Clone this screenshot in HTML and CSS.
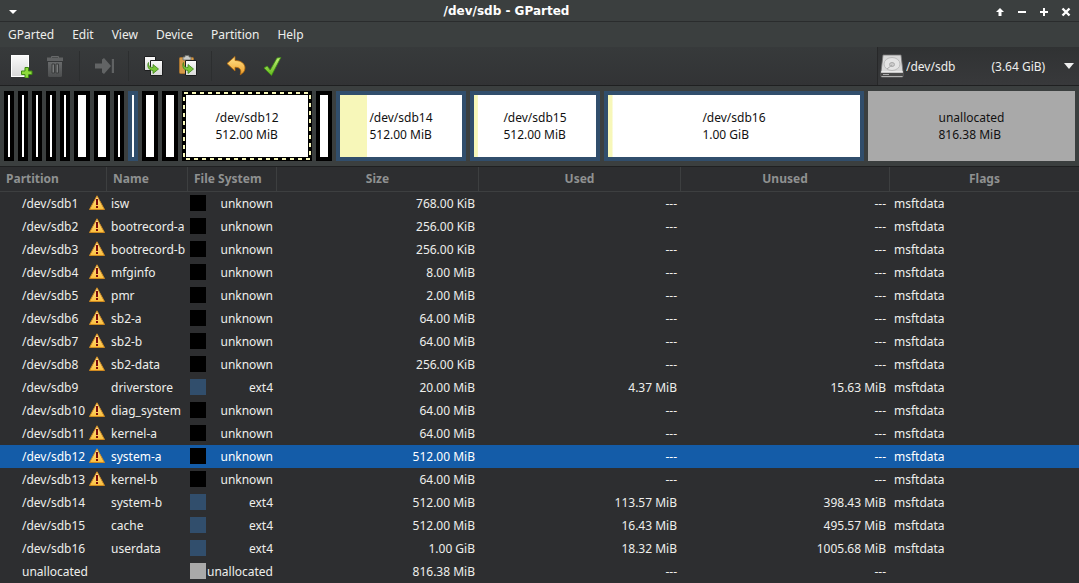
FILE: index.html
```html
<!DOCTYPE html>
<html lang="en">
<head>
<meta charset="utf-8">
<title>/dev/sdb - GParted</title>
<link rel="stylesheet" href="styles.css">
</head>
<body>
<svg class="defs" aria-hidden="true">
  <defs>
    <linearGradient id="g-warn" x1="0" y1="0" x2="0" y2="1"><stop offset="0" stop-color="#ffe79a"/><stop offset="1" stop-color="#fbbf3a"/></linearGradient>
    <linearGradient id="g-page" x1="0" y1="0" x2="0" y2="1"><stop offset="0" stop-color="#fafafa"/><stop offset="1" stop-color="#d9d9d9"/></linearGradient>
    <linearGradient id="g-green" x1="0" y1="0" x2="0" y2="1"><stop offset="0" stop-color="#c2f078"/><stop offset="1" stop-color="#62b81c"/></linearGradient>
    <linearGradient id="g-undo" x1="0" y1="0" x2="0" y2="1"><stop offset="0" stop-color="#ffe28a"/><stop offset="1" stop-color="#f0a02a"/></linearGradient>
    <linearGradient id="g-bin" x1="0" y1="0" x2="0" y2="1"><stop offset="0" stop-color="#686a6b"/><stop offset="1" stop-color="#4c4e4f"/></linearGradient>
    <symbol id="warn" viewBox="0 0 16 16">
      <path d="M8 .8 L15.500 14.500 H.5 Z" fill="url(#g-warn)" stroke="#d08a20" stroke-width="1" stroke-linejoin="round"/>
      <path d="M7 4h2v6H7zM7 11h2v2H7z" fill="#7c0a0a"/>
    </symbol>
  </defs>
</svg>
<header class="titlebar">
  <button class="win-btn" aria-label="Window menu"><svg width="10" height="10"><path d="M1 3h8L5 7z" fill="#fff"/></svg></button>
  <h1 class="title">/dev/sdb - GParted</h1>
  <div class="win-controls">
    <button class="win-btn" aria-label="Shade"><svg width="10" height="10"><path d="M5 1L9 5H6.500v4h-3V5H1z" fill="#fff"/></svg></button>
    <button class="win-btn" aria-label="Minimize"><svg width="10" height="10"><path d="M1 4h8v2H1z" fill="#fff"/></svg></button>
    <button class="win-btn" aria-label="Maximize"><svg width="10" height="10"><path d="M4 1h2v3h3v2H6v3H4V6H1V4h3z" fill="#fff"/></svg></button>
    <button class="win-btn" aria-label="Close"><svg width="10" height="10"><path d="M1.500 1.500l7 7M8.500 1.500l-7 7" stroke="#fff" stroke-width="2.400"/></svg></button>
  </div>
</header>
<nav class="menubar">
  <button>GParted</button><button>Edit</button><button>View</button><button>Device</button><button>Partition</button><button>Help</button>
</nav>
<div class="toolbar">
  <div class="tools">
    <button class="tool" aria-label="New partition"><svg width="24" height="24">
      <rect x="2.500" y="1.500" width="17" height="21" fill="url(#g-page)" stroke="#fff"/>
      <path d="M16 13.500h3.500V17H23v3.500h-3.500V24H16v-3.500h-3.500V17H16z" fill="#8edb3c" stroke="#3f8a12"/>
    </svg></button>
    <button class="tool" aria-label="Delete" disabled><svg width="24" height="24">
      <path d="M8.500 4V2.500h7V4" fill="none" stroke="#686a6b"/><path d="M4 3.500h16v3.500H4z" fill="#606263"/>
      <path d="M5 8h14v13.500q0 1.500-1.500 1.500h-11Q5 23 5 21.500z" fill="url(#g-bin)"/>
      <path d="M9 10h2.500v9H9zM13 10h2.500v9H13z" fill="#7a7c7d" stroke="#3a3c3d"/>
    </svg></button>
    <span class="sep"></span>
    <button class="tool" aria-label="Resize/Move" disabled><svg width="24" height="24">
      <path d="M3 9.500h7V5.500L12 4l7 8-7 8-2-1.500v-4H3z" fill="#626465"/><path d="M19 5h3v14h-3z" fill="#606263"/><path d="M19.500 5v14" stroke="#3c3e40"/>
    </svg></button>
    <span class="sep"></span>
    <button class="tool" aria-label="Copy"><svg width="24" height="24">
      <path d="M3.500 2.500h11v14h-11z" fill="url(#g-page)" stroke="#1d1e1f"/>
      <path d="M9.500 6.500h12v15h-12z" fill="url(#g-page)" stroke="#1d1e1f"/>
      <path d="M7.500 8.500c-.5 3 1 5 4.500 5v-3l5.500 4.500-5.500 4.500v-3c-4 0-6.500-4-4.500-8z" fill="#79c63a" stroke="#3d8419" stroke-width=".8"/>
    </svg></button>
    <button class="tool" aria-label="Paste"><svg width="24" height="24">
      <rect x="4.500" y="3.500" width="14" height="16" rx="1" fill="#d59a48" stroke="#a87430"/>
      <path d="M8 3h2V1.500h4V3h2v3H8z" fill="#c9cbc8" stroke="#6c6e6b" stroke-width=".8"/>
      <path d="M10.500 6.500h11v15h-11z" fill="url(#g-page)" stroke="#1d1e1f"/>
      <path d="M8.500 8.500c-.5 3 1 5 4.500 5v-3l5.500 4.500-5.500 4.500v-3c-4 0-6.500-4-4.500-8z" fill="#79c63a" stroke="#3d8419" stroke-width=".8"/>
    </svg></button>
    <span class="sep"></span>
    <button class="tool" aria-label="Undo"><svg width="24" height="24">
      <path d="M3 9.500L11 2.500v4C17.500 6.500 21 10 21 14c0 3-2 5.500-4.800 6.800 1.500-4 .5-7.500-5.200-7.500v3.700z" fill="url(#g-undo)" stroke="#b5690c" stroke-width=".8" stroke-linejoin="round"/>
    </svg></button>
    <button class="tool" aria-label="Apply"><svg width="24" height="24" viewBox="-5 0 24 24">
      <path d="M1 14l3.200-2 3 4L14 4l3.800-.5L8.500 21.500z" fill="url(#g-green)" stroke="#3f9412" stroke-width=".8" stroke-linejoin="round"/>
    </svg></button>
  </div>
  <label class="device">
    <svg width="24" height="24" aria-hidden="true">
      <path d="M3 1h18l2 17v4q0 1-1 1H2q-1 0-1-1v-4z" fill="#d8d8d8" stroke="#777" stroke-width=".8"/>
      <path d="M1 18.500h22V22H1z" fill="#4a4a4a"/><path d="M1 18h22" stroke="#fff"/><path d="M3 20.500h6" stroke="#aaa"/>
      <ellipse cx="12" cy="10" rx="8" ry="6.500" fill="#e4e4e4" stroke="#bbb"/><ellipse cx="12" cy="10.500" rx="2.500" ry="2" fill="#ccc" stroke="#aaa"/><path d="M12 11l-5 4" stroke="#aaa"/>
    </svg>
    <select aria-label="Device"><option>/dev/sdb&emsp;&emsp;&emsp;(3.64 GiB)</option></select>
    <svg class="arrow" width="10" height="6" aria-hidden="true"><path d="M0 0h10L5 6z" fill="#eee"/></svg>
  </label>
</div>
<section class="map" aria-label="Disk layout">
  <div class="part"></div><div class="part"></div><div class="part"></div><div class="part"></div><div class="part"></div>
  <div class="part"></div><div class="part"></div><div class="part"></div><div class="part ext4"></div><div class="part"></div><div class="part"></div>
  <div class="part"><svg class="dash"><rect x="2" y="2"/></svg><p>/dev/sdb12<br>512.00 MiB</p></div>
  <div class="part"></div>
  <div class="part ext4" style="--used:22.2%"><p>/dev/sdb14<br>512.00 MiB</p></div>
  <div class="part ext4" style="--used:3.2%"><p>/dev/sdb15<br>512.00 MiB</p></div>
  <div class="part ext4" style="--used:1.8%"><p>/dev/sdb16<br>1.00 GiB</p></div>
  <div class="part free"><p>unallocated<br>816.38 MiB</p></div>
</section>
<table class="list">
  <colgroup><col class="c-part"><col class="c-name"><col class="c-fs"><col class="c-size"><col class="c-used"><col class="c-unused"><col></colgroup>
  <thead><tr><th class="l">Partition</th><th class="l">Name</th><th class="l">File System</th><th>Size</th><th>Used</th><th>Unused</th><th>Flags</th></tr></thead>
  <tbody>
  <tr><td><div class="cell">/dev/sdb1<svg><use href="#warn"/></svg></div></td><td>isw</td><td><div class="cell"><i></i>unknown</div></td><td>768.00 KiB</td><td>---</td><td>---</td><td>msftdata</td></tr>
  <tr><td><div class="cell">/dev/sdb2<svg><use href="#warn"/></svg></div></td><td>bootrecord-a</td><td><div class="cell"><i></i>unknown</div></td><td>256.00 KiB</td><td>---</td><td>---</td><td>msftdata</td></tr>
  <tr><td><div class="cell">/dev/sdb3<svg><use href="#warn"/></svg></div></td><td>bootrecord-b</td><td><div class="cell"><i></i>unknown</div></td><td>256.00 KiB</td><td>---</td><td>---</td><td>msftdata</td></tr>
  <tr><td><div class="cell">/dev/sdb4<svg><use href="#warn"/></svg></div></td><td>mfginfo</td><td><div class="cell"><i></i>unknown</div></td><td>8.00 MiB</td><td>---</td><td>---</td><td>msftdata</td></tr>
  <tr><td><div class="cell">/dev/sdb5<svg><use href="#warn"/></svg></div></td><td>pmr</td><td><div class="cell"><i></i>unknown</div></td><td>2.00 MiB</td><td>---</td><td>---</td><td>msftdata</td></tr>
  <tr><td><div class="cell">/dev/sdb6<svg><use href="#warn"/></svg></div></td><td>sb2-a</td><td><div class="cell"><i></i>unknown</div></td><td>64.00 MiB</td><td>---</td><td>---</td><td>msftdata</td></tr>
  <tr><td><div class="cell">/dev/sdb7<svg><use href="#warn"/></svg></div></td><td>sb2-b</td><td><div class="cell"><i></i>unknown</div></td><td>64.00 MiB</td><td>---</td><td>---</td><td>msftdata</td></tr>
  <tr><td><div class="cell">/dev/sdb8<svg><use href="#warn"/></svg></div></td><td>sb2-data</td><td><div class="cell"><i></i>unknown</div></td><td>256.00 KiB</td><td>---</td><td>---</td><td>msftdata</td></tr>
  <tr><td><div class="cell">/dev/sdb9</div></td><td>driverstore</td><td><div class="cell"><i class="ext4"></i>ext4</div></td><td>20.00 MiB</td><td>4.37 MiB</td><td>15.63 MiB</td><td>msftdata</td></tr>
  <tr><td><div class="cell">/dev/sdb10<svg><use href="#warn"/></svg></div></td><td>diag_system</td><td><div class="cell"><i></i>unknown</div></td><td>64.00 MiB</td><td>---</td><td>---</td><td>msftdata</td></tr>
  <tr><td><div class="cell">/dev/sdb11<svg><use href="#warn"/></svg></div></td><td>kernel-a</td><td><div class="cell"><i></i>unknown</div></td><td>64.00 MiB</td><td>---</td><td>---</td><td>msftdata</td></tr>
  <tr class="active"><td><div class="cell">/dev/sdb12<svg><use href="#warn"/></svg></div></td><td>system-a</td><td><div class="cell"><i></i>unknown</div></td><td>512.00 MiB</td><td>---</td><td>---</td><td>msftdata</td></tr>
  <tr><td><div class="cell">/dev/sdb13<svg><use href="#warn"/></svg></div></td><td>kernel-b</td><td><div class="cell"><i></i>unknown</div></td><td>64.00 MiB</td><td>---</td><td>---</td><td>msftdata</td></tr>
  <tr><td><div class="cell">/dev/sdb14</div></td><td>system-b</td><td><div class="cell"><i class="ext4"></i>ext4</div></td><td>512.00 MiB</td><td>113.57 MiB</td><td>398.43 MiB</td><td>msftdata</td></tr>
  <tr><td><div class="cell">/dev/sdb15</div></td><td>cache</td><td><div class="cell"><i class="ext4"></i>ext4</div></td><td>512.00 MiB</td><td>16.43 MiB</td><td>495.57 MiB</td><td>msftdata</td></tr>
  <tr><td><div class="cell">/dev/sdb16</div></td><td>userdata</td><td><div class="cell"><i class="ext4"></i>ext4</div></td><td>1.00 GiB</td><td>18.32 MiB</td><td>1005.68 MiB</td><td>msftdata</td></tr>
  <tr><td><div class="cell">unallocated</div></td><td></td><td><div class="cell"><i class="free"></i>unallocated</div></td><td>816.38 MiB</td><td>---</td><td>---</td><td></td></tr>
  </tbody>
</table>
</body>
</html>
```
FILE: styles.css
```css
* { box-sizing: border-box; }
body {
  margin: 0;
  background: #2d2e30;
  color: #eeeeec;
  font: 12px/17px "Noto Sans", sans-serif;
}
button, select {
  margin: 0;
  padding: 0;
  border: 0;
  background: none;
  color: inherit;
  font: inherit;
}
svg { display: block; }
.defs { position: absolute; width: 0; height: 0; }

.titlebar {
  display: flex;
  align-items: center;
  height: 22px;
  padding: 2px 8px 0;
  background: #3b3f3f;
  border-bottom: 1px solid #2a2c2d;
}
.win-btn { width: 10px; height: 10px; }
.title {
  flex: 1;
  margin: 0;
  color: #fff;
  font: bold 12px/17px "DejaVu Sans", sans-serif;
  text-align: center;
}
.win-controls { display: flex; gap: 12px; }

.menubar {
  display: flex;
  align-items: center;
  gap: 18px;
  height: 25px;
  padding: 0 8px;
  background: #3b3f3f;
}

.toolbar {
  display: flex;
  justify-content: space-between;
  height: 39px;
  background: linear-gradient(#373a3b, #323335);
  border-bottom: 1px solid #1f2021;
}
.tools { display: flex; align-items: center; padding: 0 4px; }
.tool { display: grid; place-items: center; width: 34px; height: 34px; }
.sep { width: 15px; height: 30px; background: linear-gradient(#2c2e2f, #2c2e2f) center / 1px 100% no-repeat; }
.device {
  display: flex;
  align-items: center;
  width: 202px;
  padding: 0 5px 0 2px;
  border-left: 1px solid #272829;
  background: linear-gradient(#303233, #38393b);
}
.device select { flex: 1; min-width: 0; padding-left: 2px; appearance: none; }

.map {
  display: grid;
  grid-template-columns:
    repeat(5, minmax(0, 10fr)) repeat(2, minmax(0, 16fr)) repeat(2, minmax(0, 10fr)) repeat(2, minmax(0, 16fr))
    minmax(0, 130fr) minmax(0, 16fr) repeat(2, minmax(0, 130fr)) minmax(0, 260fr) minmax(0, 207fr);
  gap: 4px;
  height: 81px;
  padding: 5px 4px;
  background: #3b3f3f;
  border-bottom: 1px solid #1f2021;
}
.part {
  position: relative;
  display: grid;
  place-items: center;
  border: 4px solid #000;
  background: linear-gradient(#f7f7b9, #f7f7b9) left / var(--used, 0) 100% no-repeat #fff;
  background-clip: padding-box;
  color: #111;
}
.part p { margin: 0; white-space: nowrap; }
.part.ext4 { border-color: #314e6c; }
.part.free { border-color: #a9a9a9; background-color: #a9a9a9; }
.dash { position: absolute; top: -4px; left: -4px; width: calc(100% + 8px); height: calc(100% + 8px); }
.dash rect {
  width: calc(100% - 4px);
  height: calc(100% - 4px);
  fill: none;
  stroke: #f7f7b9;
  stroke-width: 2px;
  stroke-dasharray: 4 4;
}

.list { width: 100%; table-layout: fixed; border-collapse: separate; border-spacing: 0; }
.c-part { width: 107px; }
.c-name { width: 81px; }
.c-fs { width: 89px; }
.c-size, .c-used { width: 202px; }
.c-unused { width: 209px; }
th {
  height: 25px;
  padding: 0 6px 2px;
  border-right: 1px solid #3d3f40;
  border-bottom: 1px solid #3d3f40;
  color: #8f9191;
  text-align: center;
  white-space: nowrap;
}
th:last-child { border-right: 0; }
th.l { text-align: left; }
td { height: 23px; padding: 0 4px; text-align: right; white-space: nowrap; }
td:first-child { padding: 0 2px 0 22px; }
td:nth-child(2), td:last-child { text-align: left; }
td:nth-child(3) { padding: 0 4px 0 2px; }
.cell { display: flex; justify-content: space-between; align-items: flex-start; }
.cell svg { width: 16px; height: 16px; }
.cell i { width: 16px; height: 16px; background: #000; }
.cell i.ext4 { background: #314e6c; }
.cell i.free { background: #a9a9a9; }
.active td { background: #145ca8; color: #fff; }
```
